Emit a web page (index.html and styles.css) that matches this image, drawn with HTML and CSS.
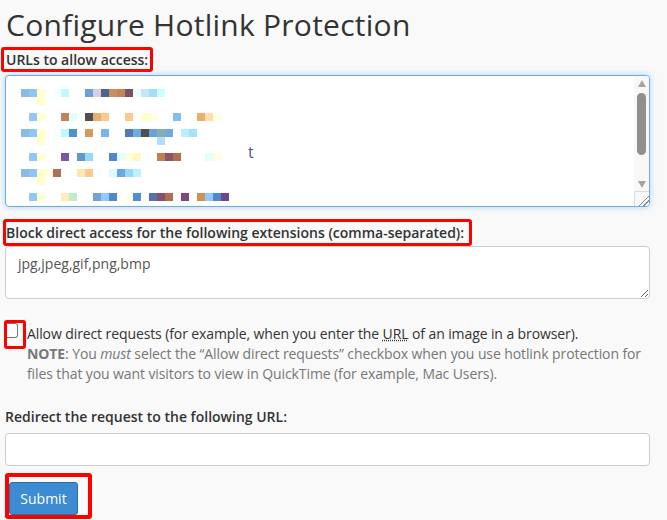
FILE: index.html
```html
<!DOCTYPE html>
<html lang="en">
  <head>
    <meta charset="UTF-8" />
    <meta name="viewport" content="width=device-width, initial-scale=1.0" />
    <title>Configure Hotlink Protection</title>
    <link rel="stylesheet" href="styles.css">
  </head>
  <body>
    <form class="page">
      <h1>Configure Hotlink Protection</h1>

      <label class="mark field-label urls-label" for="urls">URLs to allow access:</label>
      <div class="url-box" id="urls">
        <div class="url-pixels" id="pixels">
          <span class="stray">t</span>
        </div>
        <div class="scrollbar">
          <span class="arrow up"></span>
          <span class="thumb"></span>
          <span class="arrow down"></span>
          <span class="grip"></span>
        </div>
      </div>

      <label class="mark field-label ext-label" for="extensions">Block direct access for the following extensions (comma-separated):</label>
      <textarea class="ext-box" id="extensions">jpg,jpeg,gif,png,bmp</textarea>

      <div class="check-row">
        <span class="mark check-mark"><input type="checkbox" id="allowdirect" /></span>
        <div class="check-text">
          <label class="check-label" for="allowdirect">Allow direct requests (for example, when you enter the <abbr title="Uniform Resource Locator">URL</abbr> of an image in a browser).</label>
          <p class="note"><strong>NOTE</strong>: You <em>must</em> select the “Allow direct requests” checkbox when you use hotlink protection for files that you want visitors to view in QuickTime (for example, Mac Users).</p>
        </div>
      </div>

      <label class="field-label redirect-label" for="redirect">Redirect the request to the following URL:</label>
      <input class="redirect-input" type="text" id="redirect" />

      <div class="mark submit-mark">
        <button type="button" class="btn-submit">Submit</button>
      </div>
    </form>

    <script src="script.js"></script>
  </body>
</html>
```

FILE: styles.css
```css
body {
  margin: 0;
  background-color: #f9f9f9;
  font-family: 'Open Sans', sans-serif;
  font-size: 14px;
  color: #333;
}

.page {
  width: 645px;
  padding-left: 5px;
  display: flex;
  flex-direction: column;
  align-items: flex-start;
}

h1 {
  margin: 5px 0 0 1px;
  font-size: 30px;
  font-weight: 400;
  line-height: 40px;
  letter-spacing: 0.25px;
}

/* red annotation boxes */
.mark {
  border: 3px solid #f00;
  border-radius: 3px;
}

.field-label {
  font-weight: 600;
  line-height: 19px;
}

.urls-label {
  margin: 2px 0 3px -4px;
  padding: 0 2px;
}

.url-box {
  width: 645px;
  height: 132px;
  box-sizing: border-box;
  border: 1px solid #66afe9;
  border-radius: 4px;
  background: #fff;
  box-shadow: 0 0 6px rgba(102, 175, 233, 0.5);
  display: flex;
  overflow: hidden;
}

.url-pixels {
  flex: 1;
  position: relative;
  display: grid;
  grid-template-columns: repeat(26, 8px);
  grid-template-rows: repeat(14, 8px);
  align-content: start;
  padding: 13px 0 0 15px;
}

.stray {
  position: absolute;
  left: 242px;
  top: 68px;
  font-size: 16px;
  line-height: 1;
  color: #58587a;
}

.scrollbar {
  width: 15px;
  background: #f8f8f8;
  display: flex;
  flex-direction: column;
  align-items: center;
  padding-top: 4px;
}

.arrow {
  width: 0;
  height: 0;
  border-left: 4.5px solid transparent;
  border-right: 4.5px solid transparent;
}

.arrow.up {
  border-bottom: 7px solid #a3a3a3;
}

.arrow.down {
  margin-top: auto;
  border-top: 7px solid #a3a3a3;
}

.thumb {
  width: 9px;
  height: 62px;
  margin-top: 6px;
  border-radius: 5px;
  background: #8f8f8f;
}

.grip {
  width: 15px;
  height: 15px;
  margin-top: 3px;
  box-sizing: border-box;
  border-top: 1px solid #dcdcdc;
  border-left: 1px solid #dcdcdc;
  background: linear-gradient(135deg, transparent 0 62%, #888 62% 67%, transparent 67% 78%, #888 78% 83%, transparent 83%);
}

.ext-label {
  margin: 12px 0 0 -2px;
  line-height: 21px;
  padding-right: 5px;
}

.ext-box {
  width: 645px;
  height: 53px;
  box-sizing: border-box;
  margin: 0;
  padding: 7px 12px;
  border: 1px solid #ccc;
  border-radius: 4px;
  background: #fff;
  font-family: inherit;
  font-size: 14px;
  line-height: 20px;
  color: #555;
}

.check-row {
  display: flex;
  margin: 21px 0 0 -1px;
}

.check-mark {
  flex-shrink: 0;
  width: 16px;
  height: 23px;
  display: flex;
  align-items: flex-start;
}

.check-mark input {
  appearance: none;
  margin: 0;
  width: 11px;
  height: 15px;
  border: 1px solid #767676;
  border-left: none;
  border-radius: 0 3px 3px 0;
  background: #fff;
}

.check-text {
  padding: 4px 0 0 1px;
  line-height: 20px;
  letter-spacing: -0.1px;
}

.check-label {
  display: block;
}

abbr {
  text-decoration: underline dotted;
}

.note {
  margin: 0;
  color: #777;
}

.redirect-label {
  margin-top: 23px;
  line-height: 20px;
}

.redirect-input {
  width: 645px;
  height: 33px;
  box-sizing: border-box;
  margin-top: 6px;
  border: 1px solid #ccc;
  border-radius: 4px;
  background: #fff;
}

.submit-mark {
  margin-top: 7px;
  border-width: 4px;
  padding: 5px 10px 0 0;
}

.btn-submit {
  width: 69px;
  height: 33px;
  padding: 0;
  border: 1px solid #2f6fa8;
  border-radius: 3px;
  background-color: #3d8bd0;
  color: #fff;
  font-family: inherit;
  font-size: 14px;
}
```

FILE: script.js
```js
// blurred url list, drawn as 8px blocks: [row, [[col, colour], ...]]
const rows = [
  [0, [[0, '#8bbde0'], [1, '#90c4f5'], [2, '#ffffc8'], [4, '#f5ffff'], [5, '#c2f8ff'], [8, '#6f9ed6'], [9, '#d8cce4'], [10, '#52628f'], [11, '#c98f5f'], [12, '#c48458'], [13, '#7a5262'], [14, '#eefeff'], [15, '#c6e4fa'], [16, '#a8dcf8'], [17, '#caffff']]],
  [1, [[2, '#ffffc8']]],
  [3, [[1, '#90c8fa'], [2, '#ffffd0'], [5, '#c58458'], [6, '#e0ffff'], [8, '#505050'], [9, '#e8b070'], [10, '#ffc890'], [13, '#ffc890'], [15, '#ffffc8'], [16, '#fffee0'], [19, '#80bff0'], [22, '#e8b070'], [23, '#ffe0a8'], [24, '#fffee0']]],
  [5, [[0, '#88bde0'], [1, '#90c4f8'], [2, '#ffffc8'], [4, '#f5ffff'], [5, '#c0f8ff'], [6, '#5090d0'], [8, '#d89858'], [10, '#78b4f0'], [13, '#5278b8'], [14, '#6cace0'], [15, '#505050'], [16, '#6aa0e0'], [17, '#8aaeb0'], [18, '#70a8e0'], [20, '#b8f0ff'], [21, '#a8e0ff']]],
  [6, [[2, '#ffffc8'], [17, '#b0e0ff']]],
  [8, [[1, '#90c8fa'], [2, '#ffffd0'], [5, '#7858a0'], [7, '#6098c8'], [8, '#98d8ff'], [11, '#5088d0'], [12, '#e0ffff'], [13, '#fffce0'], [14, '#fff8c0'], [17, '#c08050'], [18, '#885868'], [19, '#b07050'], [23, '#e0ffff'], [24, '#fffee0']]],
  [10, [[0, '#88bde0'], [1, '#90c4f8'], [2, '#ffffc8'], [3, '#fffee0'], [4, '#b07058'], [7, '#ffe8b0'], [8, '#ffc890'], [9, '#f5ffff'], [11, '#e0f8ff'], [12, '#68a8e0'], [13, '#98d8ff'], [14, '#c0f0ff']]],
  [11, [[2, '#ffffc8']]],
  [13, [[1, '#90c8fa'], [2, '#ffffd0'], [5, '#ffecb8'], [6, '#c0ecc8'], [9, '#78a0d8'], [10, '#90c8ff'], [11, '#5088c8'], [13, '#fffee8'], [14, '#5090d0'], [16, '#5870b0'], [17, '#885070'], [18, '#b07050'], [20, '#804880'], [22, '#d09058'], [23, '#90c8ff'], [24, '#5088c8'], [25, '#704888']]],
];

const grid = document.getElementById('pixels');

rows.forEach(([row, cells]) => {
  cells.forEach(([col, colour]) => {
    const px = document.createElement('span');
    px.style.gridRow = row + 1;
    px.style.gridColumn = col + 1;
    px.style.background = colour;
    grid.appendChild(px);
  });
});
```
